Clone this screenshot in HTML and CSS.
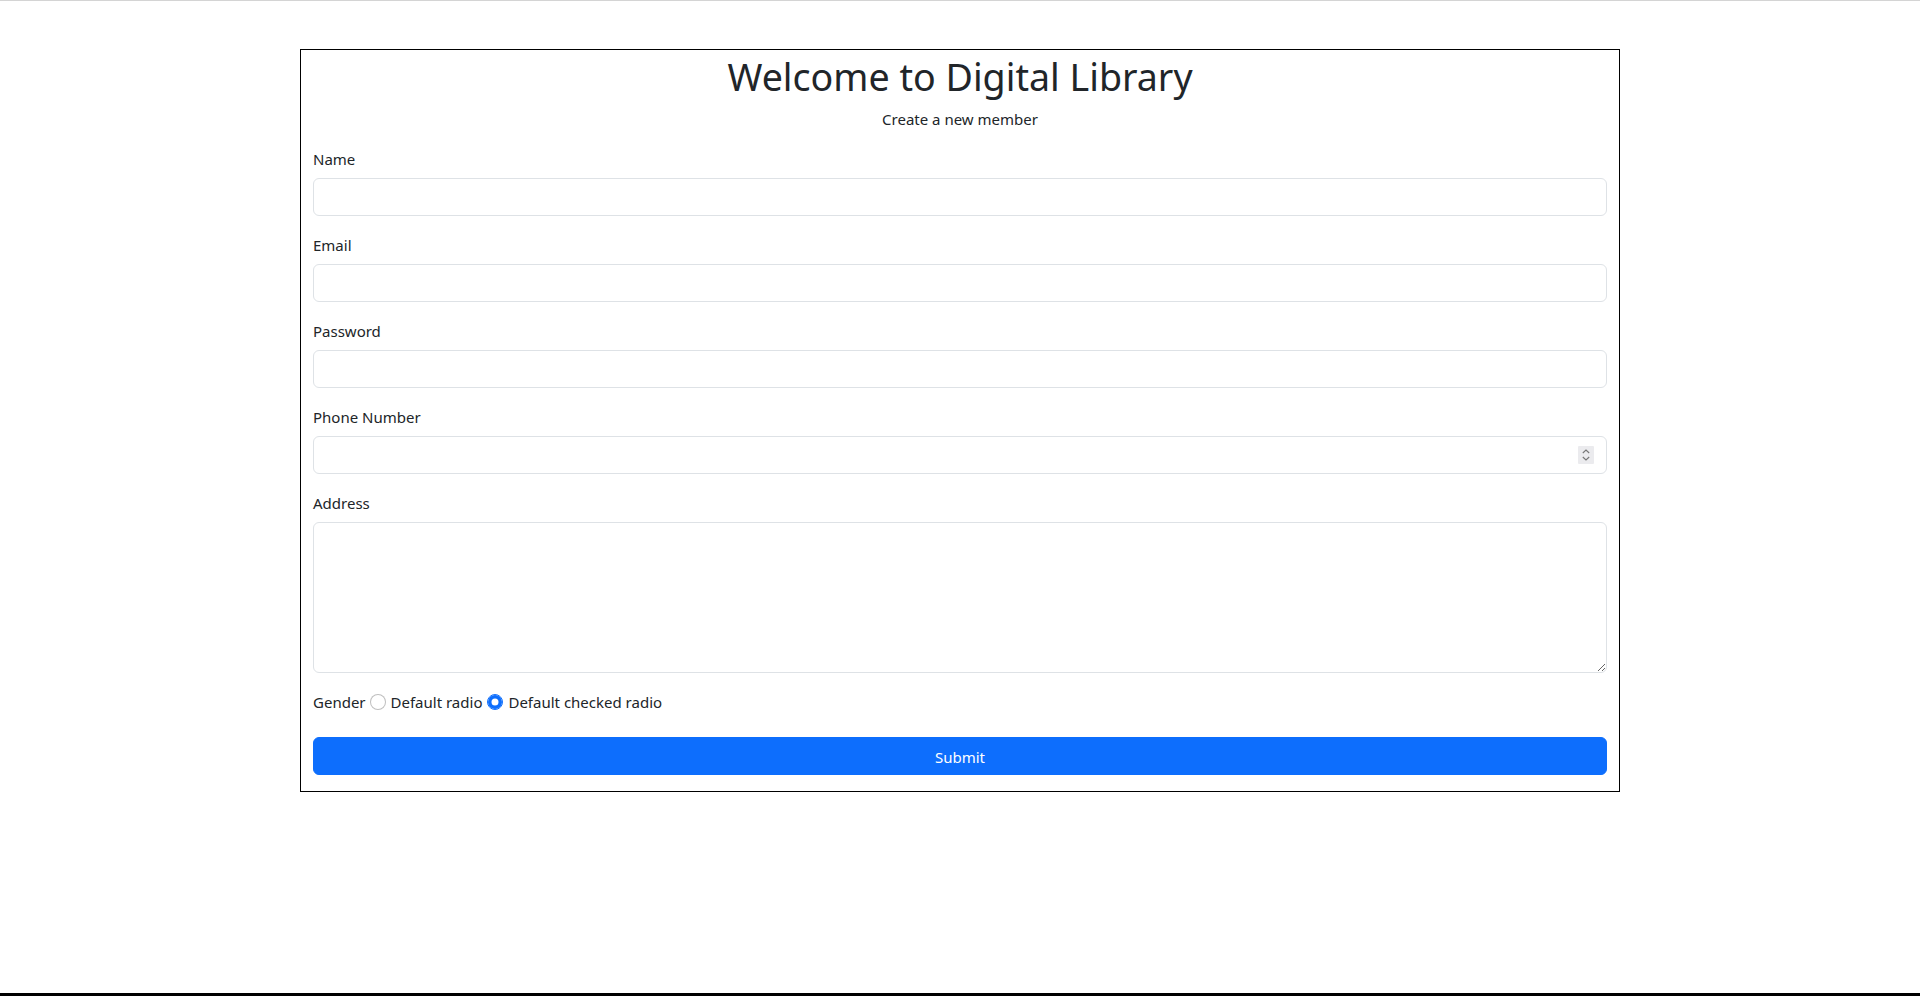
FILE: index.html
```html
<!DOCTYPE html>
<html lang="en">
<head>
<meta charset="utf-8">
<title>Digital Library</title>
<link rel="stylesheet" href="styles.css">
</head>
<body>
<div class="page">
  <div class="topline"></div>
  <main class="container">
    <h1 class="title">Welcome to Digital Library</h1>
    <p class="subtitle">Create a new member</p>
    <form class="form">
      <div class="field">
        <label class="label" for="name">Name</label>
        <input class="control" id="name" type="text">
      </div>
      <div class="field">
        <label class="label" for="email">Email</label>
        <input class="control" id="email" type="text">
      </div>
      <div class="field">
        <label class="label" for="password">Password</label>
        <input class="control" id="password" type="password">
      </div>
      <div class="field">
        <label class="label" for="phone">Phone Number</label>
        <div class="number-wrap">
          <input class="control" id="phone" type="tel">
          <span class="spinner">
            <svg width="16" height="18" viewBox="0 0 16 18">
              <rect x="0" y="0" width="16" height="18" rx="1" fill="#ebebee"/>
              <path d="M4.8 7 L8 4 L11.2 7" fill="none" stroke="#767676" stroke-width="1.1"/>
              <path d="M4.8 11 L8 14 L11.2 11" fill="none" stroke="#767676" stroke-width="1.1"/>
            </svg>
          </span>
        </div>
      </div>
      <div class="field">
        <label class="label" for="address">Address</label>
        <textarea class="control area" id="address"></textarea>
      </div>
      <div class="gender">
        <span class="gender-label">Gender</span>
        <input class="radio" type="radio" name="gender" id="r1">
        <label class="radio-label" for="r1">Default radio</label>
        <input class="radio" type="radio" name="gender" id="r2" checked>
        <label class="radio-label" for="r2">Default checked radio</label>
      </div>
      <button class="submit" type="button">Submit</button>
    </form>
  </main>
  <div class="bottomline"></div>
</div>
</body>
</html>
```

FILE: styles.css
```css
* { box-sizing: border-box; }

html, body {
  margin: 0;
  padding: 0;
  background: #ffffff;
}

body {
  font-family: "Noto Sans", "Open Sans", sans-serif;
  font-size: 15px;
  line-height: 24px;
  color: #212529;
}

.page {
  min-height: 100vh;
  display: flex;
  flex-direction: column;
}

.topline {
  height: 1px;
  background: #d4d4d4;
}

.container {
  width: 1320px;
  margin: 48px auto 0;
  border: 1px solid #000000;
  padding: 0 12px 16px;
}

.title {
  margin: 0 0 5px;
  padding-top: 3px;
  font-size: 37.6px;
  line-height: 48px;
  font-weight: 400;
  text-align: center;
  color: #212529;
}

.subtitle {
  margin: 0 0 16px;
  text-align: center;
  padding-top: 1px;
  height: 24px;
}

.form {
  display: flex;
  flex-direction: column;
}

.field {
  display: flex;
  flex-direction: column;
  margin-bottom: 16px;
}

.label {
  display: block;
  height: 24px;
  padding-top: 1px;
  margin-bottom: 8px;
}

.control {
  display: block;
  width: 100%;
  height: 38px;
  padding: 6px 12px;
  font: inherit;
  color: #212529;
  background: #ffffff;
  border: 1px solid #dee2e6;
  border-radius: 6px;
  outline: none;
}

.area {
  height: 151px;
  resize: vertical;
}

.number-wrap {
  position: relative;
}

.spinner {
  position: absolute;
  right: 13px;
  top: 10px;
  width: 16px;
  height: 18px;
  display: flex;
}

.gender {
  display: flex;
  align-items: flex-start;
  height: 24px;
  margin-top: 0;
  margin-bottom: 24px;
  padding-top: 1px;
}

.gender-label {
  margin-right: 4px;
}

.radio {
  appearance: none;
  -webkit-appearance: none;
  width: 16px;
  height: 16px;
  margin: 4px 5px 0 0;
  border: 1px solid rgba(0, 0, 0, 0.25);
  border-radius: 50%;
  background: #ffffff;
  flex: none;
}

.radio:checked {
  border-color: #0d6efd;
  box-shadow: inset 0 0 0 3.5px #0d6efd;
  background: #ffffff;
}

.radio-label {
  margin-right: 5px;
}

.submit {
  display: block;
  width: 100%;
  height: 38px;
  padding: 7px 12px 5px;
  font: inherit;
  color: #ffffff;
  background: #0d6efd;
  border: 1px solid #0d6efd;
  border-radius: 6px;
  text-align: center;
}

.bottomline {
  margin-top: auto;
  height: 3px;
  background: #000000;
}
```
